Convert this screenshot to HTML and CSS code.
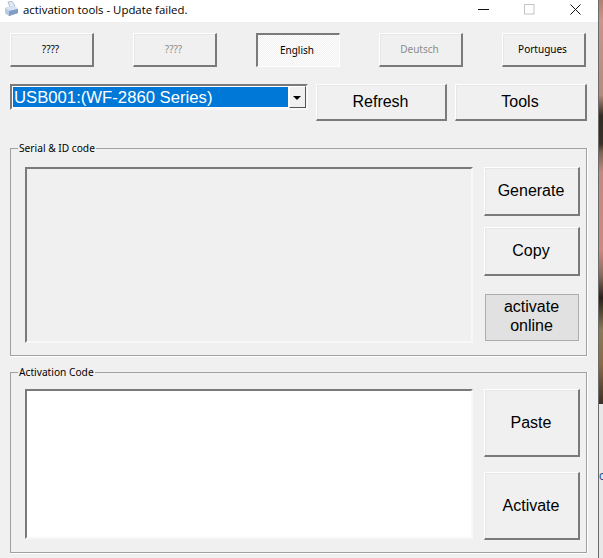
FILE: index.html
```html
<!DOCTYPE html>
<html lang="en">
<head>
<meta charset="utf-8">
<title>activation tools - Update failed.</title>
<link rel="stylesheet" href="styles.css">
</head>
<body>
<div class="screen">
  <div class="window">
    <header class="titlebar">
      <svg class="app-icon" width="16" height="16" viewBox="0 0 16 16">
        <path d="M5 1 L9 0.5 L12 5 L7 6 Z" fill="#e6edf5" stroke="#8fa3bd" stroke-width=".7"/>
        <path d="M2 7 L11 4.5 L15 8 L15 12 L6 15 L2 12 Z" fill="#a9c0de"/>
        <path d="M2 7 L6 10 L15 8 L11 4.5 Z" fill="#d8e3f1"/>
        <path d="M6 10 L6 15 L15 12 L15 8 Z" fill="#7f9dc6"/>
        <path d="M2 12 L6 15 L6 10 L2 7 Z" fill="#b9cbe3"/>
      </svg>
      <span class="title-text">activation tools - Update failed.</span>
      <div class="controls">
        <svg width="11" height="11" viewBox="0 0 11 11"><path d="M0 5.5H11" stroke="#111" stroke-width="1"/></svg>
        <svg width="11" height="11" viewBox="0 0 11 11"><rect x=".5" y=".5" width="9.5" height="9.5" fill="none" stroke="#c4c4c4"/></svg>
        <svg width="11" height="11" viewBox="0 0 11 11"><path d="M.5 .5L10.5 10.5M10.5 .5L.5 10.5" stroke="#111" stroke-width="1"/></svg>
      </div>
    </header>

    <main class="client">
      <div class="lang-row">
        <button class="btn lang">????</button>
        <button class="btn lang disabled">????</button>
        <button class="btn lang pressed">English</button>
        <button class="btn lang disabled">Deutsch</button>
        <button class="btn lang">Portugues</button>
      </div>

      <div class="device-row">
        <div class="combo">
          <span class="combo-value">USB001:(WF-2860 Series)</span>
          <span class="combo-arrow"></span>
        </div>
        <button class="btn big refresh">Refresh</button>
        <button class="btn big tools">Tools</button>
      </div>

      <fieldset class="group serial">
        <legend>Serial &amp; ID code</legend>
        <div class="box"></div>
        <div class="actions">
          <button class="btn big action">Generate</button>
          <button class="btn big action copy">Copy</button>
          <button class="flat">activate<br>online</button>
        </div>
      </fieldset>

      <fieldset class="group code">
        <legend>Activation Code</legend>
        <div class="box white"></div>
        <div class="actions">
          <button class="btn big tall">Paste</button>
          <button class="btn big tall activate">Activate</button>
        </div>
      </fieldset>
    </main>
  </div>

  <aside class="backdrop">
    <div class="photo"></div>
    <div class="other-window"><span class="stray">c</span></div>
  </aside>
</div>
</body>
</html>
```

FILE: styles.css
```css
* { box-sizing: border-box; }

html, body {
  margin: 0;
  padding: 0;
  width: 603px;
  height: 558px;
  overflow: hidden;
}

.screen {
  display: flex;
  width: 603px;
  height: 558px;
}

.window {
  width: 598px;
  height: 558px;
  background: #f0f0f0;
  display: flex;
  flex-direction: column;
}

.titlebar {
  height: 22px;
  background: #fff;
  display: flex;
  align-items: center;
  padding: 0 0 4px 3px;
  flex: none;
}

.app-icon { flex: none; }

.title-text {
  margin-left: 4px;
  font: 11.4px "Open Sans", "Noto Sans", sans-serif;
  color: #000;
  white-space: nowrap;
}

.controls {
  margin-left: auto;
  display: flex;
  gap: 35px;
  padding-right: 17px;
}

.client {
  flex: 1;
  padding: 11px 11px 0 10px;
  display: flex;
  flex-direction: column;
}

.btn {
  margin: 0;
  padding: 0 1px 1px 0;
  background: #f0f0f0;
  color: #000;
  border-style: solid;
  border-width: 1px 2px 2px 1px;
  border-color: #fff #7a7a7a #7a7a7a #fff;
  box-shadow: inset 0 1px 0 #e6e6e6, inset 1px 0 0 #e6e6e6;
  font-family: "Liberation Sans", Arial, sans-serif;
}

.lang-row {
  display: flex;
  gap: 39px;
  height: 34px;
}

.lang {
  width: 84px;
  height: 34px;
  padding: 0 2px 1px 0;
  font: 10px "Noto Sans", "Open Sans", sans-serif;
}

.disabled { color: #8c8c8c; }

.pressed {
  border-style: solid;
  border-width: 2px 1px 1px 2px;
  border-color: #7a7a7a #fff #fff #7a7a7a;
  box-shadow: none;
  padding: 0 3px 2px 0;
  background-color: #f9f9f9;
  background-image: repeating-conic-gradient(#fff 0 25%, #f0f0f0 0 50%);
  background-size: 2px 2px;
}

.device-row {
  display: flex;
  align-items: flex-start;
  margin-top: 17px;
  height: 37px;
}

.combo {
  width: 298px;
  height: 26px;
  display: flex;
  border: 2px solid;
  border-color: #7a7a7a #f8f8f8 #f8f8f8 #7a7a7a;
  background: #fff;
  padding: 1px;
}

.combo-value {
  flex: 1;
  background: #0078d7;
  color: #fff;
  font: 16.7px/21px "Liberation Sans", Arial, sans-serif;
  padding-left: 1px;
  white-space: nowrap;
}

.combo-arrow {
  width: 17px;
  background: #f0f0f0;
  margin: -1px -1px -1px 1px;
  border: 1px solid;
  border-color: #fff #555 #555 #fff;
  position: relative;
}

.combo-arrow::after {
  content: "";
  position: absolute;
  left: 3px;
  top: 9px;
  border: 4px solid transparent;
  border-top: 4px solid #000;
  border-bottom: 0;
}

.big { font-size: 16px; }

.refresh {
  width: 131px;
  height: 37px;
  margin-left: 8px;
}

.tools {
  width: 132px;
  height: 37px;
  margin-left: 8px;
}

.group {
  margin: 0;
  padding: 0 6px 0 14px;
  min-width: 0;
  width: 577px;
  border: 1px solid #a0a0a0;
  box-shadow: 0 1px 0 #fff, 1px 0 0 #fff;
  display: flex;
  gap: 11px;
}

.group legend {
  margin-left: -7px;
  padding: 0 1px;
  font: 10.2px/14px "Noto Sans", "Open Sans", sans-serif;
  color: #000;
  height: 14px;
}

.serial {
  margin-top: 20px;
  height: 215px;
}

.code {
  margin-top: 9px;
  height: 188px;
}

.box {
  width: 448px;
  border: 2px solid;
  border-color: #7a7a7a #f8f8f8 #f8f8f8 #7a7a7a;
  background: #f0f0f0;
}

.serial .box { height: 176px; margin-top: 12px; }
.code .box { height: 150px; margin-top: 10px; }
.white { background: #fff; }

.actions {
  width: 96px;
  display: flex;
  flex-direction: column;
}

.serial .actions { margin-top: 12px; }
.code .actions { margin-top: 10px; }

.action {
  width: 96px;
  height: 49px;
}

.copy { margin-top: 11px; }

.flat {
  margin: 18px 1px 0;
  padding: 0 1px 4px 0;
  width: 94px;
  height: 47px;
  background: #e1e1e1;
  border: 1px solid #adadad;
  color: #000;
  font: 16px/19px "Liberation Sans", Arial, sans-serif;
}

.tall {
  width: 96px;
  height: 68px;
  padding-bottom: 0;
}

.activate { margin-top: 15px; }

.backdrop {
  width: 5px;
  height: 558px;
  display: flex;
  flex-direction: column;
  border-left: 1px solid #6a6a6a;
}

.photo {
  height: 404px;
  background: linear-gradient(#b08070 0, #c9958a 20px, #b58a7c 95px, #332a20 116px, #3a3026 144px, #7a6050 152px, #c08a80 172px, #c98a80 250px, #8a6a60 275px, #2a2018 298px, #8a7a55 330px, #8a6a45 365px, #3e2f25 404px);
}

.other-window {
  flex: 1;
  background: #e8e8e8;
  padding-top: 66px;
  overflow: hidden;
}

.stray {
  display: block;
  font: 12px/12px "Liberation Sans", Arial, sans-serif;
  color: #1a4f8a;
}
```
